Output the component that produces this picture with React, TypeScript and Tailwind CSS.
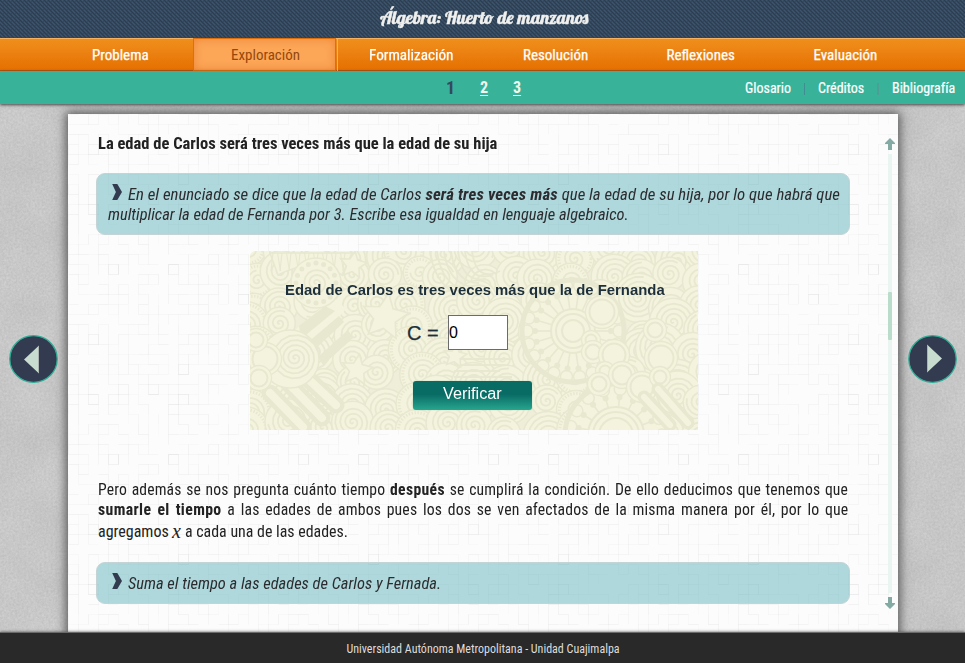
import { useLayoutEffect, useRef, useState, type ReactNode } from 'react';

/* Text run condensed horizontally to a given width. */
function Fit({ w, className = '', children }: { w: number; className?: string; children: ReactNode }) {
  const ref = useRef<HTMLSpanElement>(null);
  const [scale, setScale] = useState(1);
  useLayoutEffect(() => {
    if (ref.current) setScale(w / ref.current.offsetWidth);
  }, [w]);
  return (
    <span className="inline-block shrink-0 whitespace-nowrap text-left" style={{ width: w }}>
      <span ref={ref} className={`inline-block origin-left ${className}`} style={{ transform: `scaleX(${scale})` }}>
        {children}
      </span>
    </span>
  );
}

function random(seed: number) {
  let s = seed;
  return () => {
    s = (s * 1664525 + 1013904223) % 4294967296;
    return s / 4294967296;
  };
}

function paperLines() {
  const r = random(7);
  const out: ReactNode[] = [];
  for (let i = 0; i < 19; i++) {
    for (let j = 0; j < 19; j++) {
      const x = i * 10 + 0.5;
      const y = j * 10 + 0.5;
      const a = r();
      const b = r();
      if (a < 0.6) out.push(<path key={`h${i}-${j}`} d={`M${x} ${y}h10`} stroke="#000" strokeOpacity={0.012 + r() * 0.025} />);
      if (b < 0.6) out.push(<path key={`v${i}-${j}`} d={`M${x} ${y}v10`} stroke="#000" strokeOpacity={0.012 + r() * 0.025} />);
      if (r() < 0.03) out.push(<rect key={`r${i}-${j}`} x={x} y={y} width="10" height="10" fill="none" stroke="#000" strokeOpacity="0.04" />);
    }
  }
  return out;
}

function Paper() {
  return (
    <svg className="absolute inset-0 h-full w-full" aria-hidden="true">
      <defs>
        <pattern id="paper" width="190" height="190" patternUnits="userSpaceOnUse">{paperLines()}</pattern>
      </defs>
      <rect width="100%" height="100%" fill="#fcfcfc" />
      <rect width="100%" height="100%" fill="url(#paper)" />
    </svg>
  );
}

function Concrete() {
  return (
    <svg className="absolute inset-0 h-full w-full" aria-hidden="true">
      <filter id="grain" x="0" y="0" width="100%" height="100%" colorInterpolationFilters="sRGB">
        <feTurbulence type="fractalNoise" baseFrequency="0.45" numOctaves="3" seed="4" />
        <feColorMatrix values="0.09 0 0 0 0.745  0.09 0 0 0 0.745  0.09 0 0 0 0.745  0 0 0 0 1" />
      </filter>
      <filter id="blotch" x="0" y="0" width="100%" height="100%" colorInterpolationFilters="sRGB">
        <feTurbulence type="fractalNoise" baseFrequency="0.02" numOctaves="3" seed="9" />
        <feColorMatrix values="0 0 0 0 0.5  0 0 0 0 0.5  0 0 0 0 0.5  0.18 0 0 0 -0.05" />
      </filter>
      <rect width="100%" height="100%" filter="url(#grain)" />
      <rect width="100%" height="100%" filter="url(#blotch)" />
    </svg>
  );
}

function Weave() {
  return (
    <svg className="absolute inset-0 h-full w-full" aria-hidden="true">
      <defs>
        <pattern id="weave" width="4" height="4" patternUnits="userSpaceOnUse">
          <rect width="4" height="4" fill="#34495e" />
          <path d="M0 0h1v1H0zM1 1h1v1H1zM2 2h1v1H2zM3 3h1v1H3z" fill="#2b3d51" />
          <path d="M2 0h1v1H2zM0 2h1v1H0zM1 3h1v1H1z" fill="#3e556c" />
        </pattern>
      </defs>
      <rect width="100%" height="100%" fill="url(#weave)" />
    </svg>
  );
}

const LIGHT = '#f4f4de';
const SHADE = '#e8e8d1';

function spiral(cx: number, cy: number, rad: number, start: number) {
  let d = '';
  const turns = rad / 5;
  const n = Math.ceil(turns * 16);
  for (let i = 0; i <= n; i++) {
    const t = i / n;
    const a = start + t * turns * Math.PI * 2;
    d += `${i ? 'L' : 'M'}${(cx + Math.cos(a) * rad * t).toFixed(1)} ${(cy + Math.sin(a) * rad * t).toFixed(1)}`;
  }
  return d;
}

function star(cx: number, cy: number, rad: number) {
  let d = '';
  for (let i = 0; i < 10; i++) {
    const a = (i * Math.PI) / 5 - Math.PI / 2 + 0.15;
    const q = i % 2 ? rad * 0.48 : rad;
    d += `${i ? 'L' : 'M'}${(cx + Math.cos(a) * q).toFixed(1)} ${(cy + Math.sin(a) * q).toFixed(1)}`;
  }
  return d + 'z';
}

function Flower({ cx, cy, inner, outer, petals }: { cx: number; cy: number; inner: number; outer: number; petals: number }) {
  const items = Array.from({ length: petals }, (_, i) => (i / petals) * Math.PI * 2);
  return (
    <g>
      <circle cx={cx} cy={cy} r={outer + 5} fill={LIGHT} stroke={SHADE} strokeWidth="5" />
      {items.map((a, i) => (
        <g key={i}>
          <path
            d={`M${cx + Math.cos(a) * inner} ${cy + Math.sin(a) * inner}L${cx + Math.cos(a) * (outer - 9)} ${cy + Math.sin(a) * (outer - 9)}`}
            stroke={SHADE}
            strokeWidth="1.6"
          />
          <circle cx={cx + Math.cos(a) * (outer - 8)} cy={cy + Math.sin(a) * (outer - 8)} r="3" fill={SHADE} />
          <circle cx={cx + Math.cos(a) * outer} cy={cy + Math.sin(a) * outer} r="6" fill="none" stroke={SHADE} strokeWidth="1.5" />
        </g>
      ))}
      {[inner, inner - 5, inner - 11].map((q) => (
        <circle key={q} cx={cx} cy={cy} r={q} fill={LIGHT} stroke={SHADE} strokeWidth="2" />
      ))}
    </g>
  );
}

function Doodles() {
  const r = random(21);
  const discs: ReactNode[] = [];
  for (let i = 0; i < 120; i++) {
    const x = (i % 15) * 32 + r() * 18 - 6;
    const y = Math.floor(i / 15) * 25 + r() * 18 - 6;
    const q = 13 + r() * 9;
    discs.push(
      <g key={i}>
        <circle cx={x} cy={y} r={q + 3} fill={LIGHT} stroke={SHADE} strokeWidth="1.5" />
        {i % 5 === 0 && <circle cx={x} cy={y} r={q} fill="none" stroke={SHADE} strokeWidth="3" strokeDasharray="1.4 1.6" />}
        <path d={spiral(x, y, i % 5 === 0 ? q - 4 : q, r() * 6)} fill="none" stroke={SHADE} strokeWidth="1.8" />
      </g>,
    );
  }
  const bubbles = [
    [352, 61, 13], [341, 89, 6], [343, 101, 8], [364, 104, 12], [355, 120, 6], [372, 124, 10], [392, 136, 12],
    [411, 107, 13], [405, 79, 8], [410, 126, 7], [349, 133, 8], [15, 108, 13], [6, 89, 8], [9, 127, 9],
  ];
  return (
    <svg className="absolute inset-0" width="448" height="179" viewBox="0 0 448 179" aria-hidden="true">
      <rect width="448" height="179" fill="#eeeed9" />
      {discs}
      <g stroke={SHADE} strokeLinecap="round">
        <path d="M20 142l33 34M38 132l34 35M56 126l30 28" strokeWidth="17" />
        <path d="M20 142l33 34M38 132l34 35M56 126l30 28" strokeWidth="8" stroke={LIGHT} />
      </g>
      <path d="M44 80l40-34 12 12-50 58z" fill={LIGHT} />
      <path d="M49 75l26-20 10 5-34 28zM57 92l32-27 5 6-32 30zM68 106l30-27 5 8-30 27z" fill={SHADE} />
      <path d="M28 24l-8-22h82l-10 22q-30-18-64 0z" fill={LIGHT} stroke={SHADE} strokeWidth="1.5" />
      {Array.from({ length: 17 }, (_, i) => (
        <path key={i} d={`M${23 + i * 4.5} 2l${i % 2 ? 3 : -2} 18`} stroke={SHADE} strokeWidth="1.2" />
      ))}
      <circle cx="66" cy="32" r="25" fill={LIGHT} stroke={SHADE} strokeWidth="1.5" />
      <circle cx="66" cy="32" r="20" fill="none" stroke={SHADE} strokeWidth="5" strokeDasharray="0 7.8" strokeLinecap="round" />
      <path d={spiral(66, 32, 14, 1)} fill="none" stroke={SHADE} strokeWidth="1.8" />
      <circle cx="40" cy="108" r="29" fill={LIGHT} stroke={SHADE} strokeWidth="1.5" />
      <path d={spiral(45, 107, 24, 1)} fill="none" stroke={SHADE} strokeWidth="1.8" />
      <g fill="none" stroke={SHADE} strokeWidth="1.8">
        {[0, 1, 2, 3, 4, 5, 6].map((i) => (
          <path key={i} d={`M${180 + i * 7} 0q4 32 28 ${44 - i * 4}`} />
        ))}
        {[0, 1, 2, 3, 4, 5, 6, 7, 8].map((i) => (
          <path key={i} d={`M204 ${108 + i * 6}h${58 - (i % 3) * 6}`} />
        ))}
      </g>
      <Flower cx={323} cy={80} inner={22} outer={46} petals={22} />
      <Flower cx={366} cy={184} inner={28} outer={46} petals={17} />
      {bubbles.map(([x, y, q], i) => (
        <g key={i} fill={LIGHT} stroke={SHADE}>
          <circle cx={x} cy={y} r={q + 3.5} strokeWidth="1.3" />
          <circle cx={x} cy={y} r={q - 0.5} strokeWidth="2" />
        </g>
      ))}
      <g stroke={SHADE} strokeLinecap="round">
        <path d="M394 146l26 28M408 138l30 34" strokeWidth="13" />
        <path d="M394 146l26 28M408 138l30 34" strokeWidth="6" stroke={LIGHT} />
      </g>
      <path d={`${star(135, 66, 24)}${star(107, 119, 16)}${star(103, 14, 14)}${star(205, 105, 12)}`} fill={LIGHT} stroke={SHADE} strokeWidth="1.6" />
    </svg>
  );
}

function Chevron() {
  return (
    <svg width="10" height="16" viewBox="0 0 10 16" className="shrink-0" aria-hidden="true">
      <path d="M0.2 0H5.3L10 8L5.3 16H0.2L3.9 8Z" fill="#323b4f" />
    </svg>
  );
}

function ScrollArrow({ down = false }: { down?: boolean }) {
  return (
    <svg width="10" height="12" viewBox="0 0 10 12" className={down ? 'rotate-180' : ''} aria-hidden="true">
      <path d="M5 0L10 5V6H7V12H3V6H0V5Z" fill="#84aaa4" />
    </svg>
  );
}

function PageButton({ next = false }: { next?: boolean }) {
  return (
    <button aria-label={next ? 'Siguiente' : 'Anterior'} className="h-[48px] w-[49px]">
      <svg width="49" height="48" viewBox="0 0 49 48">
        <ellipse cx="24.5" cy="24" rx="23.7" ry="23.3" fill="#323b4f" stroke="#2fae96" strokeWidth="1.3" />
        <path d={next ? 'M19 9.5V37.5L34 23.5Z' : 'M30 10.5V38.5L15 24.5Z'} fill="#c8ddcf" />
        <path d={next ? 'M19.5 10v27' : 'M29.5 11v27'} stroke="#aab5b3" />
      </svg>
    </button>
  );
}

const tabs = [
  { label: 'Problema', w: 57 },
  { label: 'Exploración', w: 69, active: true },
  { label: 'Formalización', w: 84 },
  { label: 'Resolución', w: 65 },
  { label: 'Reflexiones', w: 68 },
  { label: 'Evaluación', w: 64 },
];

export default function App() {
  return (
    <div className="flex h-[663px] w-[965px] flex-col overflow-hidden font-['Roboto_Condensed',Roboto,sans-serif] text-[#222] [font-stretch:75%]">
      <header className="relative h-[38px] shrink-0">
        <Weave />
        <h1 className="relative flex justify-center pl-[2px] pt-[4px] text-[18px] leading-[28px] text-[#f0f0ee]">
          <Fit w={208} className="font-['Lobster','Liberation_Serif',serif] [-webkit-text-stroke:0.5px_#f0f0ee]">Álgebra: Huerto de manzanos</Fit>
        </h1>
      </header>

      <nav className="flex h-[33px] shrink-0 border-b border-t border-b-[#b9540c] border-t-[#f8b25f] bg-linear-to-b from-[#f08f1b] to-[#e57000] pl-[48px]">
        {tabs.map((t) => (
          <a
            key={t.label}
            className={
              t.active
                ? '-mt-px flex h-[33px] w-[145px] items-start border-r border-[#f8b25f] text-[#94490c]'
                : 'flex h-[31px] w-[145px] items-start justify-center pt-[6px] text-[15px] leading-5 text-white'
            }
          >
            {t.active ? (
              <span className="flex h-[33px] w-[143px] justify-center border border-[#dc700d] bg-[#fca658] pl-[2px] pt-[6px] text-[15px] leading-5 shadow-[inset_0_0_10px_#ee8637]">
                <Fit w={t.w}>{t.label}</Fit>
              </span>
            ) : (
              <Fit w={t.w} className="[-webkit-text-stroke:0.25px_#fff]">{t.label}</Fit>
            )}
          </a>
        ))}
      </nav>

      <div className="relative z-10 flex h-[33px] shrink-0 justify-between bg-[#38b399] pr-[10px] text-white shadow-[0_1px_3px_#444]">
        <div className="flex gap-[25px] pl-[446px] pt-[7px] text-[16px] font-bold leading-5">
          <Fit w={9} className="text-[18px] text-[#34495e]">1</Fit>
          <Fit w={8} className="text-[#f0f6ee] underline underline-offset-2">2</Fit>
          <Fit w={8} className="text-[#f0f6ee] underline underline-offset-2">3</Fit>
        </div>
        <div className="flex pt-[7px] text-[14px] leading-5 [-webkit-text-stroke:0.2px_#fff]">
          <Fit w={46}>Glosario</Fit>
          <span className="mx-[13px] mt-[5px] h-[12px] w-px bg-[#3f8f92]" />
          <Fit w={46}>Créditos</Fit>
          <span className="mx-[13px] mt-[5px] h-[12px] w-[2px] bg-[#4c9f95]" />
          <Fit w={63}>Bibliografía</Fit>
        </div>
      </div>

      <main className="relative flex h-[528px] shrink-0 overflow-hidden">
        <Concrete />
        <div className="relative flex w-[68px] shrink-0 items-start pl-[9px] pt-[231px]"><PageButton /></div>
        <section className="relative mt-[10px] flex h-[560px] w-[830px] shrink-0 pl-[28px] shadow-[0_0_10px_2px_#555]">
          <Paper />
          <div className="relative flex w-[754px] shrink-0 flex-col text-[16px] leading-5">
            <h2 className="mt-[20px] flex h-[21px] pl-[2px] font-bold"><Fit w={399}>La edad de Carlos será tres veces más que la edad de su hija</Fit></h2>

            <div className="mt-[18px] flex h-[62px] flex-col rounded-[9px] border border-[#c4d4d6] bg-[#79c0c5]/60 pl-[11px] pt-[10px] italic text-[#2c2c30]">
              <div className="flex h-[20px] items-start pl-[4px]">
                <Chevron />
                <span className="ml-[6px] pt-px"><Fit w={712}>En el enunciado se dice que la edad de Carlos <b className="tracking-[0.15px]">será tres veces más</b> que la edad de su hija, por lo que habrá que</Fit></span>
              </div>
              <div className="pt-px"><Fit w={521}>multiplicar la edad de Fernanda por 3. Escribe esa igualdad en lenguaje algebraico.</Fit></div>
            </div>

            <form className="relative ml-[154px] mt-[16px] flex h-[179px] w-[448px] flex-col items-center overflow-hidden rounded-tl-[6px] font-['Liberation_Sans',Arial,sans-serif] text-[#1d2f3a]">
              <Doodles />
              <p className="relative mt-[29px] h-[20px] pl-[2px] text-[15px] font-bold leading-5"><Fit w={380}>Edad de Carlos es tres veces más que la de Fernanda</Fit></p>
              <div className="relative mt-[15px] flex h-[35px] self-start pl-[157px]">
                <span className="w-[41px] pt-[6px] text-[20px] leading-6 [-webkit-text-stroke:0.25px_#1d2f3a]"><Fit w={32}>C =</Fit></span>
                <span className="flex h-[35px] w-[60px] items-center border border-[#6b6b6b] bg-white pt-px text-[16px] text-black">0</span>
              </div>
              <button type="button" className="relative mr-[3px] mt-[31px] h-[29px] w-[119px] rounded-[3px] bg-linear-to-b from-[#086b64] from-45% to-[#26a68f] pb-[4px] text-[16px] leading-[24px] text-white shadow-[0_0_1px_#5ab5a5]">
                <Fit w={59}>Verificar</Fit>
              </button>
            </form>

            <div className="mt-[50px] flex flex-col pl-[2px]">
              <Fit w={750} className="tracking-[0.15px] [word-spacing:1px]">Pero además se nos pregunta cuánto tiempo <b className="tracking-[0.4px]">después</b> se cumplirá la condición. De ello deducimos que tenemos que</Fit>
              <Fit w={750} className="tracking-[0.15px] [word-spacing:2px]"><b className="tracking-[0.4px]">sumarle el tiempo</b> a las edades de ambos pues los dos se ven afectados de la misma manera por él, por lo que</Fit>
              <div className="flex h-[24px] pt-[2px]">
                <Fit w={71}>agregamos</Fit>
                <span className="ml-[3px] w-[13px] font-['Liberation_Serif',serif] text-[20px] italic leading-[18px]">x</span>
                <Fit w={163}>a cada una de las edades.</Fit>
              </div>
            </div>

            <div className="mt-[18px] flex h-[42px] items-start rounded-[9px] border border-[#c4d4d6] bg-[#79c0c5]/60 pl-[15px] pt-[10px] italic text-[#2c2c30]">
              <Chevron />
              <span className="ml-[6px] pt-px"><Fit w={313}>Suma el tiempo a las edades de Carlos y Fernada.</Fit></span>
            </div>
          </div>

          <div className="relative ml-[35px] flex w-[10px] flex-col items-center pt-[24px]">
            <ScrollArrow />
            <div className="my-[4px] h-[439px] w-[4px] shrink-0 bg-[#eaf4f0] pt-[138px]">
              <div className="h-[48px] w-[4px] rounded-[1px] bg-[#b9dccb]" />
            </div>
            <ScrollArrow down />
          </div>
        </section>
        <div className="relative flex flex-1 items-start justify-center pl-[2px] pt-[231px]"><PageButton next /></div>
      </main>

      <footer className="relative z-10 flex h-[31px] shrink-0 justify-center border-t border-[#6a6a6a] bg-[#292929] pl-px pt-[6px] text-[12px] leading-5 text-[#ddd] shadow-[0_0_3px_#555]">
        <Fit w={273}>Universidad Autónoma Metropolitana - Unidad Cuajimalpa</Fit>
      </footer>
    </div>
  );
}
